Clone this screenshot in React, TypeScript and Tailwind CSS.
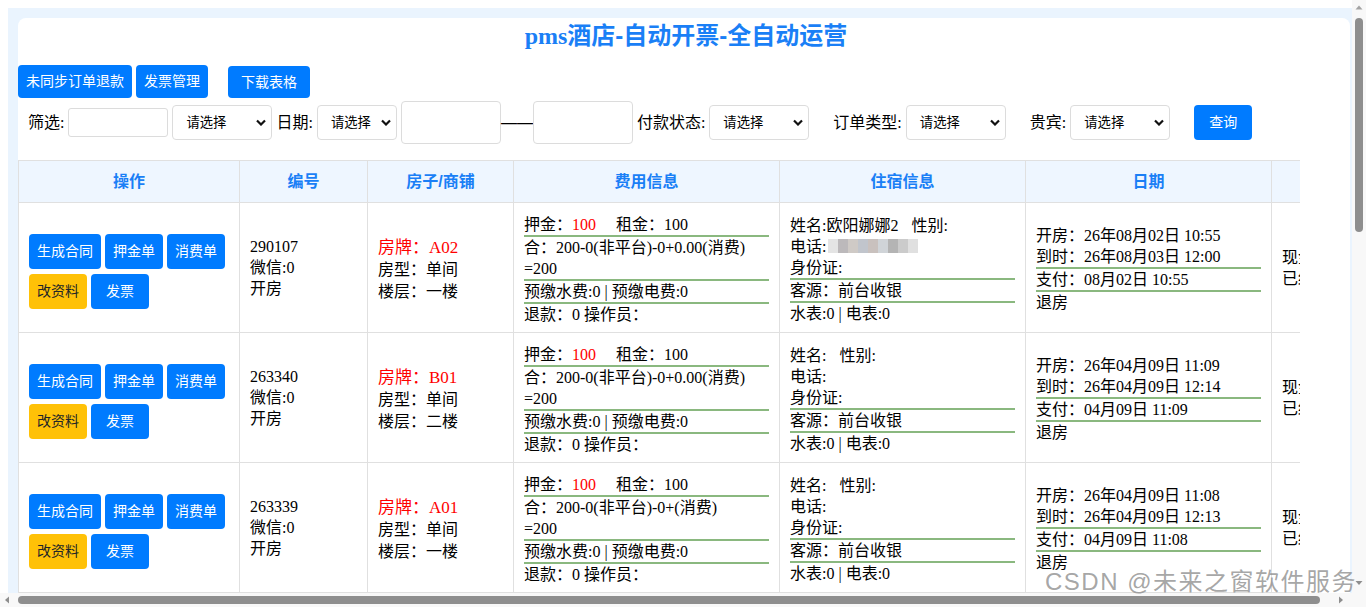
import type { ReactNode } from 'react'

const SANS = { fontFamily: '"Liberation Sans", "Noto Sans CJK SC", sans-serif' }

type Row = {
  id: string
  room: string
  floor: string
  fee: string
  name: string
  phone: boolean
  open: string
  due: string
  pay: string
}

const ROWS: Row[] = [
  { id: '290107', room: 'A02', floor: '一楼', fee: '合：200-0(非平台)-0+0.00(消费)', name: '欧阳娜娜2', phone: true, open: '26年08月02日 10:55', due: '26年08月03日 12:00', pay: '08月02日 10:55' },
  { id: '263340', room: 'B01', floor: '二楼', fee: '合：200-0(非平台)-0+0.00(消费)', name: '', phone: false, open: '26年04月09日 11:09', due: '26年04月09日 12:14', pay: '04月09日 11:09' },
  { id: '263339', room: 'A01', floor: '一楼', fee: '合：200-0(非平台)-0+(消费)', name: '', phone: false, open: '26年04月09日 11:08', due: '26年04月09日 12:13', pay: '04月09日 11:08' },
]

const BLUR = ['#e2e2e2', '#b5b2b4', '#cac5c0', '#bbbfc7', '#c4bbb7', '#ccd0d4', '#acacac', '#c6c6c6', '#dddddd']

function Btn({ children, yellow, className = '' }: { children: ReactNode; yellow?: boolean; className?: string }) {
  return (
    <div
      style={SANS}
      className={`h-[35px] min-w-[58px] px-2 rounded-[4px] flex items-center justify-center text-[14px] ${
        yellow ? 'bg-[#ffc107] text-[#212529]' : 'bg-[#007bff] text-white'
      } ${className}`}
    >
      {children}
    </div>
  )
}

function Sel({ className }: { className: string }) {
  return (
    <div
      style={SANS}
      className={`h-[35px] border border-[#dcdcdc] rounded-[4px] bg-white flex items-center justify-between pl-[13px] pr-[5px] text-[13.33px] text-black ${className}`}
    >
      <span>请选择</span>
      <svg width="10" height="7" viewBox="0 0 10 7">
        <path d="M1 1.5l4 4 4-4" fill="none" stroke="#111" strokeWidth="2.2" />
      </svg>
    </div>
  )
}

function Line({ children, last }: { children: ReactNode; last?: boolean }) {
  return <div className={`leading-[21px] ${last ? '' : 'border-b-2 border-[#8ab87f]'}`}>{children}</div>
}

export default function App() {
  return (
    <div
      className="w-[1366px] h-[607px] flex flex-col overflow-hidden bg-white relative text-black"
      style={{ fontFamily: '"Liberation Serif", "Noto Sans CJK SC", serif' }}
    >
      <div className="flex h-[593px]">
        {/* page */}
        <div className="w-[1352px] h-full overflow-hidden pt-2 pl-2">
          <div className="h-full bg-[#eaf4fe] pt-[10px] pl-[10px] pr-[2px]">
            <div className="h-full bg-white rounded-t-[8px] overflow-hidden">
              {/* title */}
              <div className="h-[47px] pt-[2px] pl-[4px] text-center text-[24px] leading-[32px] font-bold text-[#1a7ff6]">
                pms<span style={SANS}>酒店-自动开票-全自动运营</span>
              </div>

              {/* action buttons */}
              <div className="flex items-start h-[33px]">
                <Btn className="!h-[33px] px-[8px]">未同步订单退款</Btn>
                <Btn className="!h-[33px] px-[8px] ml-[4px]">发票管理</Btn>
                <Btn className="!h-[32px] mt-[1px] px-[13px] ml-[20px]">下载表格</Btn>
              </div>

              {/* filters */}
              <div className="flex items-center h-[43px] mt-[3px] pl-[10px] text-[16px]">
                <span>筛选:</span>
                <div className="w-[100px] h-[29px] ml-[4px] border border-[#dcdcdc] rounded-[3px]" />
                <Sel className="w-[100px] ml-[4px]" />
                <span className="ml-[4px]">日期:</span>
                <Sel className="w-[80px] ml-[4px]" />
                <div className="w-[100px] h-[43px] ml-[4px] border border-[#dcdcdc] rounded-[4px]" />
                <span style={SANS} className="w-[32px] leading-none">——</span>
                <div className="w-[100px] h-[43px] border border-[#dcdcdc] rounded-[4px]" />
                <span className="ml-[4px]">付款状态:</span>
                <Sel className="w-[100px] ml-[4px]" />
                <span className="ml-[24px]">订单类型:</span>
                <Sel className="w-[100px] ml-[4px]" />
                <span className="ml-[24px]">贵宾:</span>
                <Sel className="w-[100px] ml-[4px]" />
                <Btn className="ml-[24px] text-[13.5px]">查询</Btn>
              </div>

              {/* table */}
              <div className="w-[1282px] overflow-hidden mt-[16px]">
                <table className="w-[1420px] table-fixed border-collapse text-[16px]">
                  <colgroup>
                    <col className="w-[221px]" />
                    <col className="w-[128px]" />
                    <col className="w-[146px]" />
                    <col className="w-[266px]" />
                    <col className="w-[246px]" />
                    <col className="w-[246px]" />
                    <col className="w-[167px]" />
                  </colgroup>
                  <thead>
                    <tr className="h-[42px] bg-[#eef6ff]" style={SANS}>
                      {['操作', '编号', '房子/商铺', '费用信息', '住宿信息', '日期', '状态信息'].map(h => (
                        <th key={h} className="border border-[#e0e0e0] font-bold text-[16px] text-[#1a7ff6] text-center align-middle">
                          {h}
                        </th>
                      ))}
                    </tr>
                  </thead>
                  <tbody>
                    {ROWS.map(r => (
                      <tr key={r.id} className="h-[130px]">
                        <td className="border border-[#e0e0e0] px-[10px] align-middle">
                          <div className="flex flex-wrap gap-x-[4px] gap-y-[5px] mt-[7px]">
                            <Btn>生成合同</Btn>
                            <Btn>押金单</Btn>
                            <Btn>消费单</Btn>
                            <Btn yellow>改资料</Btn>
                            <Btn>发票</Btn>
                          </div>
                        </td>
                        <td className="border border-[#e0e0e0] px-[10px] align-middle leading-[21px]">
                          <div>{r.id}</div>
                          <div>微信:0</div>
                          <div>开房</div>
                        </td>
                        <td className="border border-[#e0e0e0] px-[10px] pt-[5px] align-middle leading-[22px]">
                          <div className="text-[#ff0000] text-[17px]">房牌：{r.room}</div>
                          <div>房型：单间</div>
                          <div>楼层：{r.floor}</div>
                        </td>
                        <td className="border border-[#e0e0e0] px-[10px] pt-[3px] align-middle">
                          <Line>
                            押金：<span className="text-[#ff0000]">100</span>
                            <span className="ml-[20px]">租金：100</span>
                          </Line>
                          <Line>
                            <div>{r.fee}</div>
                            <div>=200</div>
                          </Line>
                          <Line>预缴水费:0 | 预缴电费:0</Line>
                          <Line last>退款：0 操作员：</Line>
                        </td>
                        <td className="border border-[#e0e0e0] px-[10px] pt-[3px] align-middle">
                          <Line>
                            <div>
                              姓名:{r.name}
                              <span className="ml-[13px]">性别:</span>
                            </div>
                            <div className="flex items-center">
                              电话:
                              {r.phone && (
                                <div className="flex h-[14px] ml-[2px] opacity-90">
                                  {BLUR.map((c, i) => (
                                    <div key={i} className="w-[10px] h-full" style={{ background: c }} />
                                  ))}
                                </div>
                              )}
                            </div>
                            <div>身份证:</div>
                          </Line>
                          <Line>客源：前台收银</Line>
                          <Line last>水表:0 | 电表:0</Line>
                        </td>
                        <td className="border border-[#e0e0e0] px-[10px] pt-[2px] align-middle">
                          <Line>
                            <div>开房：{r.open}</div>
                            <div>到时：{r.due}</div>
                          </Line>
                          <Line>支付：{r.pay}</Line>
                          <Line last>退房</Line>
                        </td>
                        <td className="border border-[#e0e0e0] px-[10px] align-middle leading-[21px]">
                          <div>现金：0</div>
                          <div>已结：0</div>
                        </td>
                      </tr>
                    ))}
                  </tbody>
                </table>
              </div>
            </div>
          </div>
        </div>

        {/* vertical scrollbar */}
        <div className="w-[14px] h-full bg-[#f8f8f8] flex flex-col items-center">
          <svg width="14" height="14" viewBox="0 0 14 14" className="shrink-0">
            <path d="M3.5 9.5h7L7 5.5z" fill="#a3a3a3" />
          </svg>
          <div className="w-[8px] h-[214px] mt-[4px] rounded-full bg-[#8e8e8e]" />
          <div className="flex-1" />
          <svg width="14" height="14" viewBox="0 0 14 14" className="shrink-0 mb-[3px]">
            <path d="M3.5 5h7L7 9z" fill="#8e8e8e" />
          </svg>
        </div>
      </div>

      {/* horizontal scrollbar */}
      <div className="flex h-[14px]">
        <div className="w-[1352px] h-full bg-[#f8f8f8] flex items-center">
          <svg width="14" height="14" viewBox="0 0 14 14" className="shrink-0">
            <path d="M9 3.5v7L5 7z" fill="#8e8e8e" />
          </svg>
          <div className="w-[1302px] h-[8px] ml-[4px] rounded-full bg-[#8e8e8e]" />
          <div className="flex-1" />
          <svg width="14" height="14" viewBox="0 0 14 14" className="shrink-0 mr-[4px]">
            <path d="M5 3.5v7L9 7z" fill="#8e8e8e" />
          </svg>
        </div>
        <div className="w-[14px] h-full bg-[#f8f8f8]" />
      </div>

      {/* watermark */}
      <div
        style={SANS}
        className="absolute left-[1045px] top-[566px] text-[24px] leading-[32px] text-[#8f8f8f]/80 whitespace-nowrap tracking-[1.5px]"
      >
        CSDN @未来之窗软件服务
      </div>
    </div>
  )
}
